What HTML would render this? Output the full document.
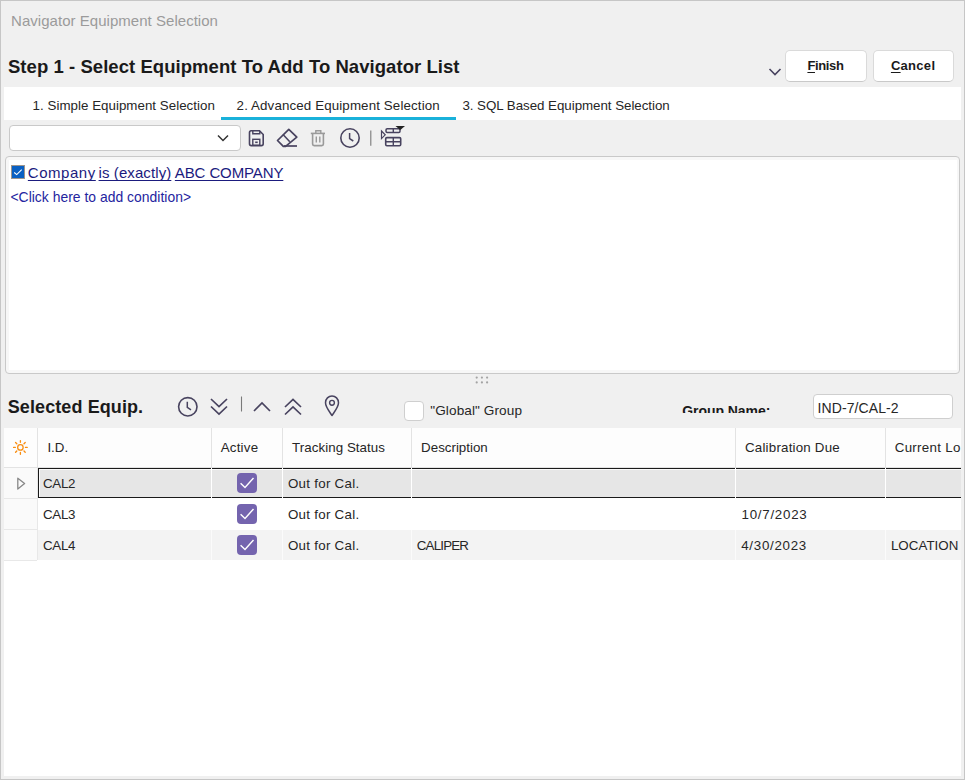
<!DOCTYPE html>
<html><head><meta charset="utf-8">
<style>
html,body{margin:0;padding:0;}
body{width:965px;height:780px;overflow:hidden;position:relative;background:#f0f0f0;font-family:"Liberation Sans",sans-serif;}
.a{position:absolute;box-sizing:border-box;}
.tx{position:absolute;white-space:nowrap;font-family:"Liberation Sans",sans-serif;}
.tx u{text-decoration:underline;text-decoration-skip-ink:none;text-underline-offset:2px;text-decoration-thickness:1px;}
svg{position:absolute;overflow:visible;}
</style></head><body>
<!-- window border -->
<div class="a" style="left:0;top:0;width:965px;height:780px;border:1px solid #c6c6c6;border-right-color:#c6c6c6;"></div>

<!-- buttons -->
<div class="a" style="left:785px;top:50px;width:82px;height:32px;background:#fff;border:1px solid #dadada;border-bottom-color:#c9c9c9;border-radius:5px;"></div>
<div class="a" style="left:873px;top:50px;width:81px;height:32px;background:#fff;border:1px solid #dadada;border-bottom-color:#c9c9c9;border-radius:5px;"></div>
<svg style="left:0;top:0" width="965" height="100"><path d="M769.5 69 L775 74.5 L780.5 69" fill="none" stroke="#48435f" stroke-width="1.6"/></svg>

<!-- tab bar -->
<div class="a" style="left:4px;top:87px;width:957px;height:33px;background:#fff;"></div>
<div class="a" style="left:221px;top:117px;width:235px;height:3px;background:#19b1da;"></div>

<!-- combo -->
<div class="a" style="left:9px;top:125px;width:232px;height:26px;background:#fff;border:1px solid #c9c9c9;border-radius:4px;"></div>
<svg style="left:0;top:0" width="965" height="160">
 <path d="M218 135.5 L223 140.5 L228 135.5" fill="none" stroke="#333" stroke-width="1.5"/>
 <!-- save -->
 <path d="M250.5 130.8 H259.5 L263.2 134.5 V143.8 Q263.2 145.6 261.4 145.6 H251.3 Q249.5 145.6 249.5 143.8 V132.6 Q249.5 130.8 251.3 130.8 Z" fill="none" stroke="#48435f" stroke-width="1.6"/>
 <path d="M252.8 131 V133.8 H259.8 V131" fill="none" stroke="#48435f" stroke-width="1.4"/>
 <rect x="252.8" y="139.3" width="7" height="6" fill="none" stroke="#48435f" stroke-width="1.4"/>
 <rect x="255.2" y="141.5" width="2.5" height="1.6" fill="#48435f"/>
 <!-- eraser -->
 <path d="M277.5 140.5 L288.8 129.3 L296.8 137.2 L285.6 146.4 H283.3 Z" fill="none" stroke="#48435f" stroke-width="1.7" stroke-linejoin="round"/>
 <path d="M283 134.5 L289.8 141.8" fill="none" stroke="#48435f" stroke-width="1.6"/>
 <path d="M284 146 H297" fill="none" stroke="#48435f" stroke-width="1.7"/>
 <!-- trash -->
 <path d="M310.8 133.4 H325" stroke="#9a9a9a" stroke-width="1.6" fill="none"/>
 <path d="M315.8 133 V130.8 H320.8 V133" stroke="#9a9a9a" stroke-width="1.4" fill="none"/>
 <path d="M312.6 133.5 V144 Q312.6 145.6 314.2 145.6 H321.8 Q323.4 145.6 323.4 144 V133.5" stroke="#9a9a9a" stroke-width="1.6" fill="none"/>
 <path d="M316.3 136.5 V142.5 M319.8 136.5 V142.5" stroke="#9a9a9a" stroke-width="1.4" fill="none"/>
 <!-- clock -->
 <circle cx="350" cy="138" r="9.2" fill="none" stroke="#48435f" stroke-width="1.6"/>
 <path d="M349.6 133 V138.6 L353.3 141" fill="none" stroke="#48435f" stroke-width="1.5"/>
 <!-- sep -->
 <path d="M370.8 130.5 V145.7" stroke="#7a7a7a" stroke-width="1.1"/>
 <!-- grid icon -->
 <path d="M381.5 131 L385.2 134.8 L381.5 138.6 Z" fill="none" stroke="#48435f" stroke-width="1.2"/>
 <rect x="386" y="128.8" width="14" height="3.6" rx="1.2" fill="none" stroke="#48435f" stroke-width="1.5"/>
 <path d="M393.3 128.8 V132.4" stroke="#48435f" stroke-width="1.4"/>
 <rect x="385.7" y="137.6" width="15" height="8.2" rx="1.2" fill="none" stroke="#48435f" stroke-width="1.6"/>
 <path d="M385.7 141.7 H400.7 M393.3 137.6 V145.8" stroke="#48435f" stroke-width="1.4"/>
 <path d="M395.5 126 H405 L400.3 130 Z" fill="#222"/>
</svg>

<!-- condition panel -->
<div class="a" style="left:5px;top:156px;width:955px;height:218px;background:#f7f7f7;border:1px solid #c9c9c9;border-radius:4px;"></div>
<div class="a" style="left:9px;top:160px;width:948px;height:210px;background:#fff;"></div>
<div class="a" style="left:11px;top:165px;width:14px;height:14px;background:#0a60c2;border:1px solid #9d958d;"></div>
<svg style="left:0;top:0" width="965" height="200"><path d="M14.2 172.5 L16.7 174.6 L21.7 169.7" fill="none" stroke="#fff" stroke-width="1.1"/></svg>

<!-- splitter dots -->
<svg style="left:0;top:0" width="965" height="400">
 <g fill="#a3a3a3"><circle cx="476.7" cy="377.6" r="1.1"/><circle cx="481.9" cy="377.6" r="1.1"/><circle cx="487.1" cy="377.6" r="1.1"/><circle cx="476.7" cy="382.4" r="1.1"/><circle cx="481.9" cy="382.4" r="1.1"/><circle cx="487.1" cy="382.4" r="1.1"/></g>
</svg>

<!-- selected equip toolbar icons -->
<svg style="left:0;top:0" width="965" height="430">
 <circle cx="187.8" cy="406.8" r="9.2" fill="none" stroke="#48435f" stroke-width="1.6"/>
 <path d="M187.3 401.8 V407.4 L191 409.8" fill="none" stroke="#48435f" stroke-width="1.5"/>
 <path d="M211 399 L219 406.5 L227 399 M211 406.5 L219 414 L227 406.5" fill="none" stroke="#48435f" stroke-width="1.7"/>
 <path d="M241.5 396.5 V411.5" stroke="#7a7a7a" stroke-width="1.1"/>
 <path d="M254 411 L262 403 L270 411" fill="none" stroke="#48435f" stroke-width="1.7"/>
 <path d="M285 407 L293 399.5 L301 407 M285 414.5 L293 407 L301 414.5" fill="none" stroke="#48435f" stroke-width="1.7"/>
 <path d="M332 415.5 C329 411 325.5 407 325.5 402.8 C325.5 398.8 328.5 396 332 396 C335.5 396 338.5 398.8 338.5 402.8 C338.5 407 335 411 332 415.5 Z" fill="none" stroke="#48435f" stroke-width="1.5" stroke-linejoin="round"/>
 <circle cx="332" cy="402.8" r="2.4" fill="none" stroke="#48435f" stroke-width="1.4"/>
</svg>
<!-- global checkbox -->
<div class="a" style="left:404px;top:401px;width:20px;height:20px;background:#fff;border:1px solid #cfcfcf;border-radius:4px;"></div>
<!-- group name label clipped -->
<div class="a" style="left:670px;top:395px;width:120px;height:18px;overflow:hidden;">
 <div class="tx" style="left:12.2px;top:7.6px;font-size:14px;line-height:17px;font-weight:700;color:#1a1a1a;letter-spacing:-0.05px;">Group Name:</div>
</div>
<!-- textbox -->
<div class="a" style="left:813px;top:394px;width:140px;height:25px;background:#fff;border:1px solid #cfcfcf;border-radius:4px;"></div>

<!-- grid -->
<div class="a" style="left:4px;top:428px;width:957px;height:348px;background:#fff;"></div>
<!-- header -->
<div class="a" style="left:4px;top:428px;width:957px;height:40px;background:#fdfdfd;border-bottom:1px solid #e3e3e3;"></div>
<div class="a" style="left:37px;top:428px;width:1px;height:40px;background:#e3e3e3;"></div>
<div class="a" style="left:211px;top:428px;width:1px;height:40px;background:#e3e3e3;"></div>
<div class="a" style="left:282px;top:428px;width:1px;height:40px;background:#e3e3e3;"></div>
<div class="a" style="left:411px;top:428px;width:1px;height:40px;background:#e3e3e3;"></div>
<div class="a" style="left:735px;top:428px;width:1px;height:40px;background:#e3e3e3;"></div>
<div class="a" style="left:885px;top:428px;width:1px;height:40px;background:#e3e3e3;"></div>
<svg style="left:0;top:0" width="965" height="470">
 <circle cx="20.4" cy="447.4" r="2.75" fill="none" stroke="#f98d0f" stroke-width="1.25"/>
 <g stroke="#f98d0f" stroke-width="1.35" stroke-linecap="round">
  <path d="M25.50 447.40 L27.20 447.40 M24.01 451.01 L25.21 452.21 M20.40 452.50 L20.40 454.20 M16.79 451.01 L15.59 452.21 M15.30 447.40 L13.60 447.40 M16.79 443.79 L15.59 442.59 M20.40 442.30 L20.40 440.60 M24.01 443.79 L25.21 442.59"/>
 </g>
</svg>

<!-- indicator column -->
<div class="a" style="left:4px;top:468px;width:33px;height:92px;background:#fafafa;"></div>
<div class="a" style="left:4px;top:498px;width:33px;height:1px;background:#e8e8e8;"></div>
<div class="a" style="left:4px;top:529px;width:33px;height:1px;background:#e8e8e8;"></div>
<div class="a" style="left:4px;top:560px;width:33px;height:1px;background:#e8e8e8;"></div>
<div class="a" style="left:37px;top:468px;width:1px;height:92px;background:#e8e8e8;"></div>
<svg style="left:0;top:0" width="965" height="500"><path d="M17.8 478.2 L24.6 483.6 L17.8 489 Z" fill="none" stroke="#888" stroke-width="1.3" stroke-linejoin="round"/></svg>

<!-- row 1 selected -->
<div class="a" style="left:38px;top:468px;width:923px;height:30px;background:#e6e6e6;"></div>
<div class="a" style="left:38px;top:468px;width:923px;height:1px;background:#1a1a1a;"></div>
<div class="a" style="left:38px;top:497px;width:923px;height:1px;background:#1a1a1a;"></div>
<div class="a" style="left:38px;top:468px;width:1px;height:30px;background:#1a1a1a;"></div>
<div class="a" style="left:39px;top:469px;width:922px;height:1px;background:#fafafa;"></div>
<div class="a" style="left:39px;top:469px;width:1px;height:28px;background:#fafafa;"></div>
<div class="a" style="left:211px;top:468px;width:1px;height:30px;background:#fff;"></div>
<div class="a" style="left:282px;top:468px;width:1px;height:30px;background:#fff;"></div>
<div class="a" style="left:411px;top:468px;width:1px;height:30px;background:#fff;"></div>
<div class="a" style="left:735px;top:468px;width:1px;height:30px;background:#fff;"></div>
<div class="a" style="left:885px;top:468px;width:1px;height:30px;background:#fff;"></div>
<!-- row 3 alt -->
<div class="a" style="left:38px;top:530px;width:923px;height:30px;background:#f3f3f3;"></div>
<div class="a" style="left:211px;top:530px;width:1px;height:30px;background:#fbfbfb;"></div>
<div class="a" style="left:282px;top:530px;width:1px;height:30px;background:#fbfbfb;"></div>
<div class="a" style="left:411px;top:530px;width:1px;height:30px;background:#fbfbfb;"></div>
<div class="a" style="left:735px;top:530px;width:1px;height:30px;background:#fbfbfb;"></div>
<div class="a" style="left:885px;top:530px;width:1px;height:30px;background:#fbfbfb;"></div>

<!-- active checkboxes -->
<div class="a" style="left:237px;top:473px;width:20px;height:20px;background:#7464ae;border-radius:4px;"></div>
<div class="a" style="left:237px;top:504px;width:20px;height:20px;background:#7464ae;border-radius:4px;"></div>
<div class="a" style="left:237px;top:535px;width:20px;height:20px;background:#7464ae;border-radius:4px;"></div>
<svg style="left:0;top:0" width="965" height="560">
 <g fill="none" stroke="#fff" stroke-width="1.4">
  <path d="M240.6 483.2 L245 487.5 L253.5 478"/>
  <path d="M240.6 514.2 L245 518.5 L253.5 509"/>
  <path d="M240.6 545.2 L245 549.5 L253.5 540"/>
 </g>
</svg>

<div class='tx' style='left:11.05px;top:11.80px;font-size:15px;line-height:18px;font-weight:400;color:#9b9b9b;letter-spacing:0.034px;'>Navigator Equipment Selection</div>
<div class='tx' style='left:7.95px;top:55.59px;font-size:18.5px;line-height:22px;font-weight:700;color:#1a1a1a;letter-spacing:0.056px;'>Step 1 - Select Equipment To Add To Navigator List</div>
<div class='tx' style='left:32.60px;top:98.38px;font-size:13.33px;line-height:16px;font-weight:400;color:#262626;letter-spacing:0.028px;'>1. Simple Equipment Selection</div>
<div class='tx' style='left:236.60px;top:98.38px;font-size:13.33px;line-height:16px;font-weight:400;color:#262626;letter-spacing:0.126px;'>2. Advanced Equipment Selection</div>
<div class='tx' style='left:462.40px;top:98.38px;font-size:13.33px;line-height:16px;font-weight:400;color:#262626;letter-spacing:-0.037px;'>3. SQL Based Equipment Selection</div>
<div class='tx' style='left:807.41px;top:57.80px;font-size:13px;line-height:16px;font-weight:700;color:#1a1a1a;letter-spacing:-0.363px;'><u>F</u>inish</div>
<div class='tx' style='left:890.91px;top:57.80px;font-size:13px;line-height:16px;font-weight:700;color:#1a1a1a;letter-spacing:0.288px;'><u>C</u>ancel</div>
<div class='tx' style='left:27.85px;top:164.30px;font-size:15px;line-height:18px;font-weight:400;color:#1b1b7e;letter-spacing:0.533px;'><u>Company</u></div>
<div class='tx' style='left:98.55px;top:164.30px;font-size:15px;line-height:18px;font-weight:400;color:#1b1b7e;letter-spacing:0.092px;'><u>is (exactly)</u></div>
<div class='tx' style='left:174.85px;top:164.30px;font-size:15px;line-height:18px;font-weight:400;color:#1b1b7e;letter-spacing:-0.115px;'><u>ABC COMPANY</u></div>
<div class='tx' style='left:10.48px;top:188.68px;font-size:13.9px;line-height:17px;font-weight:400;color:#2424a0;letter-spacing:0.022px;'>&lt;Click here to add condition&gt;</div>
<div class='tx' style='left:7.76px;top:396.46px;font-size:18px;line-height:22px;font-weight:700;color:#1a1a1a;letter-spacing:0.095px;'>Selected Equip.</div>
<div class='tx' style='left:430.29px;top:403.09px;font-size:13.6px;line-height:16px;font-weight:400;color:#262626;letter-spacing:0.092px;'>"Global" Group</div>
<div class='tx' style='left:817.48px;top:399.65px;font-size:14px;line-height:17px;font-weight:400;color:#262626;letter-spacing:0.100px;'>IND-7/CAL-2</div>
<div class='tx' style='left:47.40px;top:439.58px;font-size:13.33px;line-height:16px;font-weight:400;color:#262626;letter-spacing:0.000px;'>I.D.</div>
<div class='tx' style='left:220.70px;top:439.58px;font-size:13.33px;line-height:16px;font-weight:400;color:#262626;letter-spacing:0.221px;'>Active</div>
<div class='tx' style='left:292.10px;top:439.58px;font-size:13.33px;line-height:16px;font-weight:400;color:#262626;letter-spacing:0.056px;'>Tracking Status</div>
<div class='tx' style='left:421.10px;top:439.58px;font-size:13.33px;line-height:16px;font-weight:400;color:#262626;letter-spacing:0.000px;'>Description</div>
<div class='tx' style='left:745.00px;top:439.58px;font-size:13.33px;line-height:16px;font-weight:400;color:#262626;letter-spacing:0.202px;'>Calibration Due</div>
<div class='tx' style='left:894.70px;top:439.58px;font-size:13.33px;line-height:16px;font-weight:400;color:#262626;letter-spacing:0.313px;width:66.3px;overflow:hidden;'>Current Lo</div>
<div class='tx' style='left:43.00px;top:475.58px;font-size:13.33px;line-height:16px;font-weight:400;color:#262626;letter-spacing:-0.315px;'>CAL2</div>
<div class='tx' style='left:287.90px;top:475.58px;font-size:13.33px;line-height:16px;font-weight:400;color:#262626;letter-spacing:0.286px;'>Out for Cal.</div>
<div class='tx' style='left:43.00px;top:506.58px;font-size:13.33px;line-height:16px;font-weight:400;color:#262626;letter-spacing:-0.315px;'>CAL3</div>
<div class='tx' style='left:287.90px;top:506.58px;font-size:13.33px;line-height:16px;font-weight:400;color:#262626;letter-spacing:0.286px;'>Out for Cal.</div>
<div class='tx' style='left:741.60px;top:506.58px;font-size:13.33px;line-height:16px;font-weight:400;color:#262626;letter-spacing:0.725px;'>10/7/2023</div>
<div class='tx' style='left:43.00px;top:537.58px;font-size:13.33px;line-height:16px;font-weight:400;color:#262626;letter-spacing:-0.315px;'>CAL4</div>
<div class='tx' style='left:287.90px;top:537.58px;font-size:13.33px;line-height:16px;font-weight:400;color:#262626;letter-spacing:0.286px;'>Out for Cal.</div>
<div class='tx' style='left:416.80px;top:537.58px;font-size:13.33px;line-height:16px;font-weight:400;color:#262626;letter-spacing:-0.808px;'>CALIPER</div>
<div class='tx' style='left:741.20px;top:537.58px;font-size:13.33px;line-height:16px;font-weight:400;color:#262626;letter-spacing:0.725px;'>4/30/2023</div>
<div class='tx' style='left:890.90px;top:537.58px;font-size:13.33px;line-height:16px;font-weight:400;color:#262626;letter-spacing:0.049px;'>LOCATION</div>
</body></html>
